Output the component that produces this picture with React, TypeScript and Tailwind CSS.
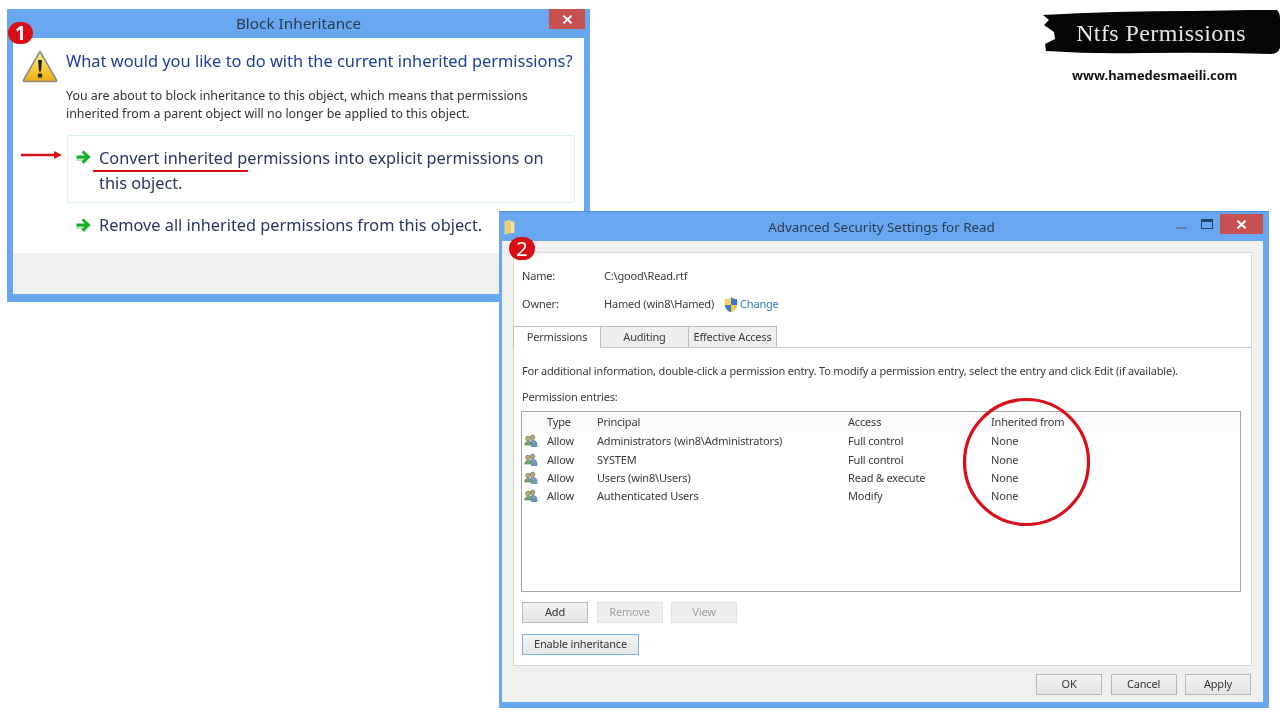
import React from "react";

const font = { fontFamily: '"Noto Sans", "Open Sans", sans-serif' };

function WarningIcon() {
  return (
    <svg width="36" height="33" viewBox="0 0 36 33" className="shrink-0">
      <defs>
        <linearGradient id="wg" x1="0" y1="0" x2="0" y2="1">
          <stop offset="0" stopColor="#fff3a8" />
          <stop offset="0.55" stopColor="#f7cf3a" />
          <stop offset="1" stopColor="#e8a917" />
        </linearGradient>
      </defs>
      <path d="M18 1.5 L34.5 30 Q35 31.5 33.5 31.5 L2.5 31.5 Q1 31.5 1.5 30 Z" fill="url(#wg)" stroke="#8e8e86" strokeWidth="1.6" strokeLinejoin="round" />
      <path d="M16 10 H20 L19 21.5 H17 Z" fill="#222" />
      <circle cx="18" cy="25.5" r="2.3" fill="#222" />
    </svg>
  );
}

function GreenArrow() {
  return (
    <svg width="16" height="15" viewBox="0 0 16 15" className="shrink-0">
      <path d="M1 9.5 H10 M8 13.5 L12 10" stroke="#9ed8a4" strokeWidth="3" opacity="0.7" fill="none" />
      <path d="M1.5 7 H12 M7.5 1.5 L13.5 7 L7.5 12.5" fill="none" stroke="#14b02a" strokeWidth="3" />
    </svg>
  );
}

function Badge({ n, className }: { n: string; className: string }) {
  return (
    <div className={`absolute flex items-center justify-center rounded-full bg-[#d80f16] text-white ${className}`}>
      {n}
    </div>
  );
}

function UsersIcon() {
  return (
    <svg width="14" height="14" viewBox="0 0 14 14" className="shrink-0">
      <circle cx="8.6" cy="3.4" r="2.3" fill="#b9a27c" stroke="#6f7f6a" strokeWidth="0.7" />
      <path d="M5.5 10 Q6 6.3 8.8 6.3 Q12.5 6.3 13 10 Z" fill="#7fa0c4" stroke="#5b6f8c" strokeWidth="0.6" />
      <circle cx="4" cy="4.6" r="2.3" fill="#c8a878" stroke="#5d7a4f" strokeWidth="0.7" />
      <path d="M0.6 11 Q1 7.4 4.2 7.4 Q7.6 7.4 8 11 Z" fill="#7aa868" stroke="#4f7048" strokeWidth="0.6" />
      <path d="M7 13 H13.4 V10.2 Q10 8.6 7 10.6 Z" fill="#6f93bd" />
    </svg>
  );
}

function ShieldIcon() {
  return (
    <svg width="14" height="16" viewBox="0 0 14 16" className="shrink-0">
      <path d="M7 0.6 Q10 2.4 13.2 2.4 V8 Q13 12.6 7 15.4 Q1 12.6 0.8 8 V2.4 Q4 2.4 7 0.6 Z" fill="#f2c84a" />
      <path d="M7 0.6 Q10 2.4 13.2 2.4 V8 H7 Z" fill="#3f78c4" />
      <path d="M7 8 H0.8 V2.4 Q4 2.4 7 0.6 Z" fill="#f5d66a" />
      <path d="M7 8 V15.4 Q1 12.6 0.8 8 Z" fill="#3f78c4" />
    </svg>
  );
}

function WinButton({ label, w, off, focus }: { label: string; w: string; off?: boolean; focus?: boolean }) {
  const cls = off
    ? "border-[#e2e2e2] bg-[#efefef] text-[#a0a0a0]"
    : focus
    ? "border-[#7db4e8] bg-gradient-to-b from-[#f4f4f4] to-[#e6e6e6] text-[#333]"
    : "border-[#b8b8b8] bg-gradient-to-b from-[#f3f3f3] to-[#e4e4e4] text-[#333]";
  return (
    <div className={`flex h-[21px] items-center justify-center border ${w} ${cls}`}>{label}</div>
  );
}

const rows = [
  ["Allow", "Administrators (win8\\Administrators)", "Full control", "None"],
  ["Allow", "SYSTEM", "Full control", "None"],
  ["Allow", "Users (win8\\Users)", "Read & execute", "None"],
  ["Allow", "Authenticated Users", "Modify", "None"],
];

function BlockDialog() {
  return (
    <div className="absolute left-[7px] top-[9px] flex h-[293px] w-[583px] flex-col bg-[#69a8f0]">
      <div className="relative flex h-[29px] shrink-0 items-center justify-center pb-[1px] text-[15.3px] text-[#2b3a4d]">
        Block Inheritance
        <div className="absolute right-[5px] top-0 flex h-[20px] w-[36px] items-center justify-center bg-[#c75050] text-white">
          <svg width="11" height="9" viewBox="0 0 11 9">
            <path d="M1.5 0.8 L9.5 8.2 M9.5 0.8 L1.5 8.2" stroke="#fff" strokeWidth="2" />
          </svg>
        </div>
      </div>
      <div className="mx-[6px] mb-[8px] flex flex-1 flex-col bg-white">
        <div className="flex flex-1 flex-col pl-[9px] pt-[12px]">
          <div className="flex">
            <WarningIcon />
            <div className="ml-[8px] flex-1">
              <div className="h-[22px] whitespace-nowrap text-[16.4px] leading-[22px] text-[#1e3f96]">
                What would you like to do with the current inherited permissions?
              </div>
              <div className="mt-[15px] whitespace-nowrap text-[12.4px] leading-[18px] text-[#333]">
                <div>You are about to block inheritance to this object, which means that permissions</div>
                <div>inherited from a parent object will no longer be applied to this object.</div>
              </div>
            </div>
          </div>
          <div className="ml-[45px] mr-[9px] mt-[12px] flex h-[68px] items-start rounded-[2px] border border-[#daf0f7] pl-[7px] pt-[10px]">
            <div className="mt-[4px]"><GreenArrow /></div>
            <div className="ml-[8px] w-[460px] text-[16.3px] leading-[25px] text-[#2a3560]">
              Convert inherited permissions into explicit permissions on this object.
            </div>
          </div>
          <div className="ml-[53px] mt-[10px] flex h-[25px] items-center">
            <GreenArrow />
            <div className="ml-[8px] whitespace-nowrap text-[16.3px] leading-[25px] text-[#2a3560]">
              Remove all inherited permissions from this object.
            </div>
          </div>
        </div>
        <div className="h-[41px] shrink-0 bg-[#f0f0f0]" />
      </div>
    </div>
  );
}

function SecurityDialog() {
  return (
    <div className="absolute left-[499px] top-[211px] flex h-[497px] w-[770px] flex-col border-t border-[#4a90e2] bg-[#69a8f0] text-[11px] tracking-[-0.18px]">
      <div className="relative flex h-[29px] shrink-0 items-center justify-center pr-[5px] pt-[1px] text-[13.4px] tracking-normal text-[#2b3a4d]">
        <svg width="11" height="15" viewBox="0 0 11 15" className="absolute left-[5px] top-[8px]">
          <path d="M0.5 1 L7 0 V13 L0.5 14.5 Z" fill="#e9cf7a" />
          <path d="M7 1.5 H10.5 V13 H7 Z" fill="#f6e39c" />
        </svg>
        Advanced Security Settings for Read
        <div className="absolute bottom-[12px] left-[677px] h-[2px] w-[11px] bg-[#5b7fa8]" />
        <div className="absolute left-[702px] top-[7px] h-[10px] w-[12px] border border-t-[3px] border-[#24446e]" />
        <div className="absolute left-[721px] top-[2px] flex h-[20px] w-[43px] items-center justify-center bg-[#c75050]">
          <svg width="11" height="9" viewBox="0 0 11 9">
            <path d="M1.5 0.8 L9.5 8.2 M9.5 0.8 L1.5 8.2" stroke="#fff" strokeWidth="2" />
          </svg>
        </div>
      </div>
      <div className="ml-[3px] mr-[6px] mb-[6px] flex flex-1 flex-col bg-[#f0f0f0] px-[11px] pt-[11px]">
        <div className="flex h-[414px] shrink-0 flex-col border border-[#d8d8d8] bg-white text-[#3a3a3a]">
          <div className="mt-[12px] flex h-[23px] items-center pl-[8px]">
            <div className="w-[82px]">Name:</div>
            <div>C:\good\Read.rtf</div>
          </div>
          <div className="mt-[5px] flex h-[23px] items-center pl-[8px]">
            <div className="w-[82px]">Owner:</div>
            <div className="w-[120px] whitespace-nowrap">Hamed (win8\Hamed)</div>
            <ShieldIcon />
            <div className="ml-[2px] text-[#2f7bc4]">Change</div>
          </div>
          <div className="mt-[11px] flex h-[21px] items-end border-b border-[#c8c8c8]">
            <div className="relative z-10 -mb-[1px] -ml-[1px] flex h-[22px] w-[88px] items-center justify-center border border-b-0 border-[#bdbdbd] bg-white">Permissions</div>
            <div className="flex h-[21px] w-[88px] items-center justify-center border border-l-0 border-b-0 border-[#bdbdbd] bg-[#efefef]">Auditing</div>
            <div className="flex h-[21px] w-[88px] items-center justify-center border border-l-0 border-b-0 border-[#bdbdbd] bg-[#efefef]">Effective Access</div>
          </div>
          <div className="mt-[14px] h-[18px] whitespace-nowrap pl-[8px] leading-[18px]">
            For additional information, double-click a permission entry. To modify a permission entry, select the entry and click Edit (if available).
          </div>
          <div className="mt-[8px] h-[18px] pl-[8px] leading-[18px]">Permission entries:</div>
          <div className="ml-[7px] mt-[5px] h-[181px] w-[720px] border border-[#a4a4a4] pt-[1px]">
            <div className="grid h-[19px] grid-cols-[25px_50px_251px_143px_1fr] items-center bg-[#f9fafb] pb-[2px] leading-[17px]">
              <div />
              <div>Type</div>
              <div>Principal</div>
              <div>Access</div>
              <div>Inherited from</div>
            </div>
            {rows.map((r, i) => (
              <div key={i} className="grid h-[18.4px] grid-cols-[25px_50px_251px_143px_1fr] items-center leading-[18px]">
                <div className="pl-[2px]"><UsersIcon /></div>
                <div>{r[0]}</div>
                <div className="whitespace-nowrap">{r[1]}</div>
                <div>{r[2]}</div>
                <div>{r[3]}</div>
              </div>
            ))}
          </div>
          <div className="ml-[8px] mt-[10px] flex gap-[8.5px]">
            <WinButton label="Add" w="w-[66px]" />
            <WinButton label="Remove" w="w-[66px]" off />
            <WinButton label="View" w="w-[66px]" off />
          </div>
          <div className="ml-[8px] mt-[11px]">
            <WinButton label="Enable inheritance" w="w-[117px]" focus />
          </div>
        </div>
        <div className="mt-[8px] flex justify-end gap-[8.5px] pr-[1px]">
          <WinButton label="OK" w="w-[66px]" />
          <WinButton label="Cancel" w="w-[66px]" />
          <WinButton label="Apply" w="w-[66px]" />
        </div>
      </div>
    </div>
  );
}

export default function App() {
  return (
    <div className="relative h-[720px] w-[1280px] overflow-hidden bg-white blur-[0.3px]" style={font}>
      <BlockDialog />
      <SecurityDialog />

      <Badge n="1" className="left-[8px] top-[22px] h-[22px] w-[25px] text-[19px] font-bold leading-none" />
      <Badge n="2" className="left-[509px] top-[237px] h-[23px] w-[26px] text-[20px] leading-none" />

      {/* red arrow */}
      <svg width="44" height="10" viewBox="0 0 44 10" className="absolute left-[20px] top-[150px]">
        <path d="M1 5 H36" stroke="#d8101a" strokeWidth="2.4" />
        <path d="M34 1 L42 5 L34 9 Z" fill="#d8101a" />
      </svg>
      {/* underline */}
      <div className="absolute left-[93px] top-[169.5px] h-[2px] w-[155px] bg-[#d8101a]" />
      {/* circle */}
      <svg width="130" height="130" viewBox="0 0 130 130" className="absolute left-[961px] top-[397px]">
        <ellipse cx="65.5" cy="65" rx="62" ry="62.5" fill="none" stroke="#d8101a" strokeWidth="3.2" />
      </svg>

      {/* brand */}
      <div className="absolute left-[1042px] top-[10px] h-[46px] w-[238px]">
        <svg width="238" height="46" viewBox="0 0 238 46" className="absolute inset-0">
          <path d="M1 5 Q70 1 150 1 Q210 0 234 -0.5 Q238 2 238 8 L238 38 Q236 44 228 44 Q170 42 100 43 Q50 44 4 41 L3 34 L13 29 L12 22 L2 15 L7 10 Z" fill="#050505" />
        </svg>
        <div className="relative flex h-full items-center justify-center pb-[1px] text-[24px] tracking-[0.4px] text-[#e6e6e6]" style={{ fontFamily: '"Liberation Serif", serif' }}>
          Ntfs Permissions
        </div>
      </div>
      <div className="absolute left-[1072px] top-[65px] whitespace-nowrap text-[12.9px] font-bold leading-[20px] text-[#111]">
        www.hamedesmaeili.com
      </div>
    </div>
  );
}
